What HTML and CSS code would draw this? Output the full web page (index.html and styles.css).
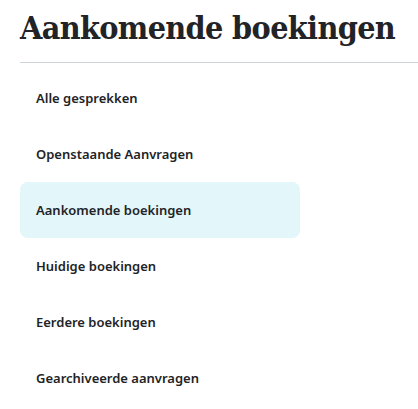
FILE: index.html
```html
<!DOCTYPE html>
<html lang="nl">
<head>
    <meta charset="UTF-8">
    <meta name="viewport" content="width=device-width, initial-scale=1.0">
    <link rel="stylesheet" href="styles.css">
    <title>Aankomende boekingen</title>
</head>
<body>
    <div class="page">
        <h1 class="title">Aankomende boekingen</h1>
        <nav class="menu">
            <a class="menu-item" href="#">Alle gesprekken</a>
            <a class="menu-item" href="#">Openstaande Aanvragen</a>
            <a class="menu-item active" href="#">Aankomende boekingen</a>
            <a class="menu-item" href="#">Huidige boekingen</a>
            <a class="menu-item" href="#">Eerdere boekingen</a>
            <a class="menu-item" href="#">Gearchiveerde aanvragen</a>
        </nav>
    </div>
</body>
</html>
```

FILE: styles.css
```css
body {
    margin: 0;
    background-color: #fff;
    color: #222326;
}

.page {
    padding-left: 20px;
}

.title {
    font-family: 'DejaVu Serif', serif;
    font-stretch: condensed;
    font-weight: bold;
    font-size: 32px;
    line-height: 36px;
    margin: 10px 0 0 0;
    padding-bottom: 16px;
    border-bottom: 1px solid #cfd3da;
    letter-spacing: -0.65px;
}

.menu {
    display: flex;
    flex-direction: column;
    padding-top: 7px;
}

.menu-item {
    display: flex;
    align-items: center;
    width: 264px;
    height: 56px;
    padding-left: 16px;
    border-radius: 8px;
    font-family: 'Noto Sans', sans-serif;
    font-weight: 600;
    font-size: 13px;
    color: #222326;
    text-decoration: none;
}

.menu-item.active {
    background-color: #e3f6fa;
}
```
